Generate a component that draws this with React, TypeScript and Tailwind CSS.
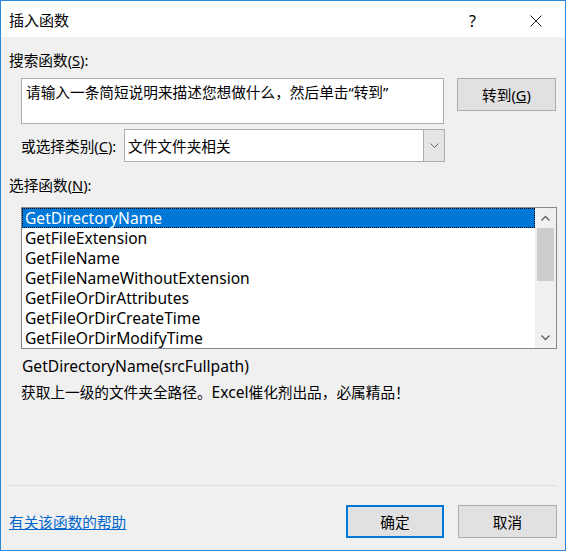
import React from 'react';

const funcs = [
    'GetDirectoryName',
    'GetFileExtension',
    'GetFileName',
    'GetFileNameWithoutExtension',
    'GetFileOrDirAttributes',
    'GetFileOrDirCreateTime',
    'GetFileOrDirModifyTime',
];

const Chevron = ({ up }: { up?: boolean }) => (
    <svg width="9" height="6" viewBox="0 0 9 6">
        {up ? (
            <path d="M0.5 5.5 L4.5 1.5 L8.5 5.5" fill="none" stroke="#606060" strokeWidth="1.3" />
        ) : (
            <path d="M0.5 0.5 L4.5 4.5 L8.5 0.5" fill="none" stroke="#606060" strokeWidth="1.3" />
        )}
    </svg>
);

const App: React.FC = () => {
    return (
        <div className="w-[566px] h-[551px] border border-[#2b88d8] bg-[#f0f0f0] flex flex-col text-[14.67px] text-black font-['Noto_Sans','Noto_Sans_CJK_SC',sans-serif] overflow-hidden">
            {/* title bar */}
            <div className="h-[36px] bg-white flex items-center pl-[8px] pt-[3px] shrink-0">
                <span className="text-[15px]">插入函数</span>
                <span className="ml-auto mr-[54px] text-[16px]">?</span>
                <svg width="12" height="12" viewBox="0 0 12 12" className="mr-[23px]">
                    <path d="M0.5 0.5 L11.5 11.5 M11.5 0.5 L0.5 11.5" stroke="#222" strokeWidth="1" />
                </svg>
            </div>

            <div className="h-[20px] leading-[20px] mt-[13px] ml-[8px]">
                搜索函数(<span className="underline">S</span>):
            </div>

            <div className="flex items-start mt-[8px] ml-[20px]">
                <div className="w-[423px] h-[46px] bg-white border border-[#acacac] px-[4px] pt-[3px] leading-[20px]">
                    请输入一条简短说明来描述您想做什么，然后单击“转到”
                </div>
                <button className="ml-[13px] w-[99px] h-[33px] bg-[#e1e1e1] border border-[#adadad] flex items-center justify-center">
                    转到(<span className="underline">G</span>)
                </button>
            </div>

            <div className="flex items-center mt-[5px] ml-[20px]">
                <span className="w-[103px]">或选择类别(<span className="underline">C</span>):</span>
                <div className="w-[321px] h-[33px] bg-white border border-[#adadad] flex items-stretch">
                    <span className="flex-1 flex items-center pl-[3px]">文件文件夹相关</span>
                    <div className="w-[21px] bg-[#e5e5e5] border-l border-[#adadad] flex items-center justify-center">
                        <svg width="9" height="5" viewBox="0 0 9 5">
                            <path d="M0.5 0.5 L4.5 4.5 L8.5 0.5" fill="none" stroke="#606060" strokeWidth="1" />
                        </svg>
                    </div>
                </div>
            </div>

            <div className="h-[20px] leading-[20px] mt-[13px] ml-[8px]">
                选择函数(<span className="underline">N</span>):
            </div>

            <div className="mt-[12px] ml-[20px] w-[536px] h-[142px] bg-white border border-[#828790] flex text-[15.6px]">
                <div className="flex-1 flex flex-col">
                    {funcs.map((f, i) => (
                        <div
                            key={f}
                            className={
                                i === 0
                                    ? 'h-[20px] leading-[18px] pl-[2px] bg-[#0078d7] text-white border border-dotted border-[#000]'
                                    : 'h-[20px] leading-[20px] pl-[3px]'
                            }
                        >
                            {f}
                        </div>
                    ))}
                </div>
                <div className="w-[21px] bg-[#f0f0f0] flex flex-col items-center">
                    <div className="h-[20px] flex items-center justify-center">
                        <Chevron up />
                    </div>
                    <div className="w-[17px] h-[53px] bg-[#cdcdcd]" />
                    <div className="mt-auto h-[20px] flex items-center justify-center">
                        <Chevron />
                    </div>
                </div>
            </div>

            <div className="h-[20px] leading-[20px] mt-[7px] ml-[21px] text-[15.6px]">GetDirectoryName(srcFullpath)</div>
            <div className="h-[20px] leading-[20px] mt-[6px] ml-[20px]">
                获取上一级的文件夹全路径。<span className="text-[15.6px]">Excel</span>催化剂出品，必属精品！
            </div>

            <div className="mt-auto ml-[7px] w-[549px] h-px bg-[#dfdfdf]" />

            <div className="flex items-center mt-[19px] mb-[12px] ml-[8px]">
                <a className="text-[#0066cc] underline cursor-pointer">有关该函数的帮助</a>
                <button className="ml-auto w-[98px] h-[33px] bg-[#e1e1e1] border-2 border-[#0078d7] flex items-center justify-center">
                    确定
                </button>
                <button className="ml-[14px] mr-[8px] w-[99px] h-[33px] bg-[#e1e1e1] border border-[#adadad] flex items-center justify-center">
                    取消
                </button>
            </div>
        </div>
    );
};

export default App;
